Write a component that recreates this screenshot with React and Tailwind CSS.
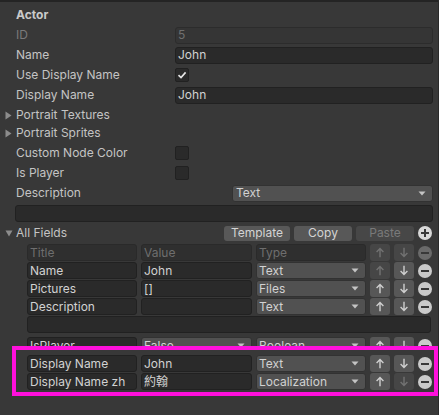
import React from "react";

function Field({ children, className = "" }) {
  return (
    <div
      className={`h-[17px] rounded-[3px] border border-[#212121] bg-[#2a2a2a] px-[2px] flex items-center text-[#d2d2d2] leading-none whitespace-nowrap overflow-hidden ${className}`}
    >
      {children}
    </div>
  );
}

function HeadField({ children }) {
  return (
    <div className="h-[17px] rounded-[3px] border border-[#2a2a2a] bg-[#2f2f2f] px-[2px] flex items-center text-[#6e6e6e] leading-none">
      {children}
    </div>
  );
}

function Caret() {
  return (
    <svg width="8" height="5" viewBox="0 0 8 5" className="shrink-0">
      <path d="M0.5 0.5H7.5L4 4.5Z" fill="#c4c4c4" />
    </svg>
  );
}

function Drop({ children, className = "" }) {
  return (
    <div
      className={`h-[17px] rounded-[3px] border border-[#323232] bg-[#515151] pl-[2px] pr-[6px] flex items-center justify-between text-[#d2d2d2] leading-none whitespace-nowrap ${className}`}
    >
      <span>{children}</span>
      <Caret />
    </div>
  );
}

function ArrowBtn({ up, on }) {
  return (
    <div
      className={`h-[17px] w-[20px] rounded-[3px] flex items-center justify-center ${
        on ? "bg-[#575757]" : "bg-[#464646]"
      }`}
    >
      <svg
        width="10"
        height="11"
        viewBox="0 0 10 11"
        className={up ? "" : "rotate-180"}
      >
        <path
          d="M5 1.6V10.2M1.6 5L5 1.6L8.4 5"
          fill="none"
          stroke={on ? "#cfcfcf" : "#727272"}
          strokeWidth="1.4"
        />
      </svg>
    </div>
  );
}

function Minus({ dim }) {
  return (
    <div
      className={`w-[14px] h-[14px] rounded-full flex items-center justify-center ${
        dim ? "bg-[#6a6a6a]" : "bg-[#cacaca]"
      }`}
    >
      <div className="w-[8px] h-[2px] bg-[#383838]" />
    </div>
  );
}

function Plus() {
  return (
    <div className="relative w-[14px] h-[14px] rounded-full bg-[#d8d8d8] flex items-center justify-center">
      <div className="w-[8px] h-[2px] bg-[#383838]" />
      <div className="absolute w-[2px] h-[8px] bg-[#383838]" />
    </div>
  );
}

function Row({ title, value, type, up, down, valueDrop }) {
  return (
    <div className="grid grid-cols-[110px_111px_110px_20px_20px_14px] gap-x-[4px] items-center h-[17px]">
      <Field>{title}</Field>
      {valueDrop ? <Drop>{value}</Drop> : <Field>{value}</Field>}
      <Drop>{type}</Drop>
      <ArrowBtn up on={up} />
      <ArrowBtn on={down} />
      <Minus />
    </div>
  );
}

function Prop({ label, children, dim }) {
  return (
    <div className="flex items-center h-[18px] pl-[16px]">
      <div className={`w-[159px] ${dim ? "text-[#7a7a7a]" : "text-[#c4c4c4]"}`}>
        {label}
      </div>
      {children}
    </div>
  );
}

function Check({ on }) {
  return (
    <div className="w-[14px] h-[14px] rounded-[2px] border border-[#212121] bg-[#2a2a2a] flex items-center justify-center">
      {on && (
        <svg width="10" height="10" viewBox="0 0 10 10">
          <path
            d="M1.5 5.2L4 7.6L8.6 2.4"
            fill="none"
            stroke="#e6e6e6"
            strokeWidth="1.6"
          />
        </svg>
      )}
    </div>
  );
}

function Fold({ label, open }) {
  return (
    <div className="flex items-center h-[18px] pl-[5px] text-[#c4c4c4]">
      <div className="w-[11px] flex items-center">
        {open ? (
          <svg width="8" height="7" viewBox="0 0 8 7">
            <path d="M0.5 0.5H7.5L4 6.5Z" fill="#8c8c8c" />
          </svg>
        ) : (
          <svg width="7" height="9" viewBox="0 0 7 9">
            <path d="M0.5 0.5V8.5L6.5 4.5Z" fill="#8c8c8c" />
          </svg>
        )}
      </div>
      <span>{label}</span>
    </div>
  );
}

export default function App() {
  return (
    <div className="w-[439px] h-[415px] bg-[#383838] overflow-hidden border-r border-[#2a2a2a] font-['Inter','Noto_Sans_CJK_TC',sans-serif] text-[12px] leading-none">
      <div className="h-[2px] bg-[#242424]" />
      <div className="flex flex-col pt-[4px]">
        <div className="flex items-center h-[18px] pl-[16px] font-bold text-[#cacaca]">
          Actor
        </div>
        <div className="flex flex-col gap-y-[2px] mt-[2px]">
          <Prop label="ID" dim>
            <div className="w-[258px] h-[17px] rounded-[3px] border border-[#2c2c2c] bg-[#353535] px-[2px] flex items-center text-[#707070]">
              5
            </div>
          </Prop>
          <Prop label="Name">
            <Field className="w-[258px]">John</Field>
          </Prop>
          <Prop label="Use Display Name">
            <Check on />
          </Prop>
          <Prop label="Display Name">
            <Field className="w-[258px]">John</Field>
          </Prop>
          <div className="flex flex-col">
            <Fold label="Portrait Textures" />
            <Fold label="Portrait Sprites" />
          </div>
          <Prop label="Custom Node Color">
            <Check />
          </Prop>
          <Prop label="Is Player">
            <Check />
          </Prop>
          <div className="flex items-center h-[18px] pl-[16px]">
            <div className="w-[216px] text-[#c4c4c4]">Description</div>
            <Drop className="w-[201px] pl-[3px]">Text</Drop>
          </div>
          <div className="h-[18px] flex items-center pl-[15px]">
            <div className="w-[418px] h-[17px] rounded-[3px] border border-[#212121] bg-[#2a2a2a]" />
          </div>
          <div className="flex items-center h-[18px] pr-[6px]">
            <Fold label="All Fields" open />
            <div className="ml-auto flex items-center gap-x-[4px]">
              <div className="w-[66px] h-[15px] rounded-[3px] bg-[#585858] flex items-center justify-center text-[#d4d4d4]">
                Template
              </div>
              <div className="w-[58px] h-[15px] rounded-[3px] bg-[#585858] flex items-center justify-center text-[#d4d4d4]">
                Copy
              </div>
              <div className="w-[58px] h-[15px] rounded-[3px] bg-[#474747] flex items-center justify-center text-[#7a7a7a]">
                Paste
              </div>
              <Plus />
            </div>
          </div>
        </div>

        <div className="flex flex-col gap-y-[1px] pl-[27px] mt-[2px]">
          <div className="grid grid-cols-[110px_111px_110px_20px_20px_14px] gap-x-[4px] items-center h-[17px]">
            <HeadField>Title</HeadField>
            <HeadField>Value</HeadField>
            <HeadField>Type</HeadField>
            <ArrowBtn up on={false} />
            <ArrowBtn on={false} />
            <Minus dim />
          </div>
          <Row title="Name" value="John" type="Text" up={false} down />
          <Row title="Pictures" value="[]" type="Files" up down />
          <Row title="Description" value="" type="Text" up down />
          <div className="w-[404px] h-[17px] rounded-[3px] border border-[#212121] bg-[#2a2a2a]" />
        </div>

        <div className="pl-[27px] mt-[4px] h-[9px] overflow-hidden">
          <Row title="IsPlayer" value="False" type="Boolean" up down valueDrop />
        </div>

        <div className="ml-[12px] w-[426px] border-[4px] border-[#ff10dc] pt-[5px] pb-[2px] pl-[11px] flex flex-col gap-y-[1px]">
          <Row title="Display Name" value="John" type="Text" up down />
          <Row title="Display Name zh" value="約翰" type="Localization" up down={false} />
        </div>
      </div>
    </div>
  );
}
